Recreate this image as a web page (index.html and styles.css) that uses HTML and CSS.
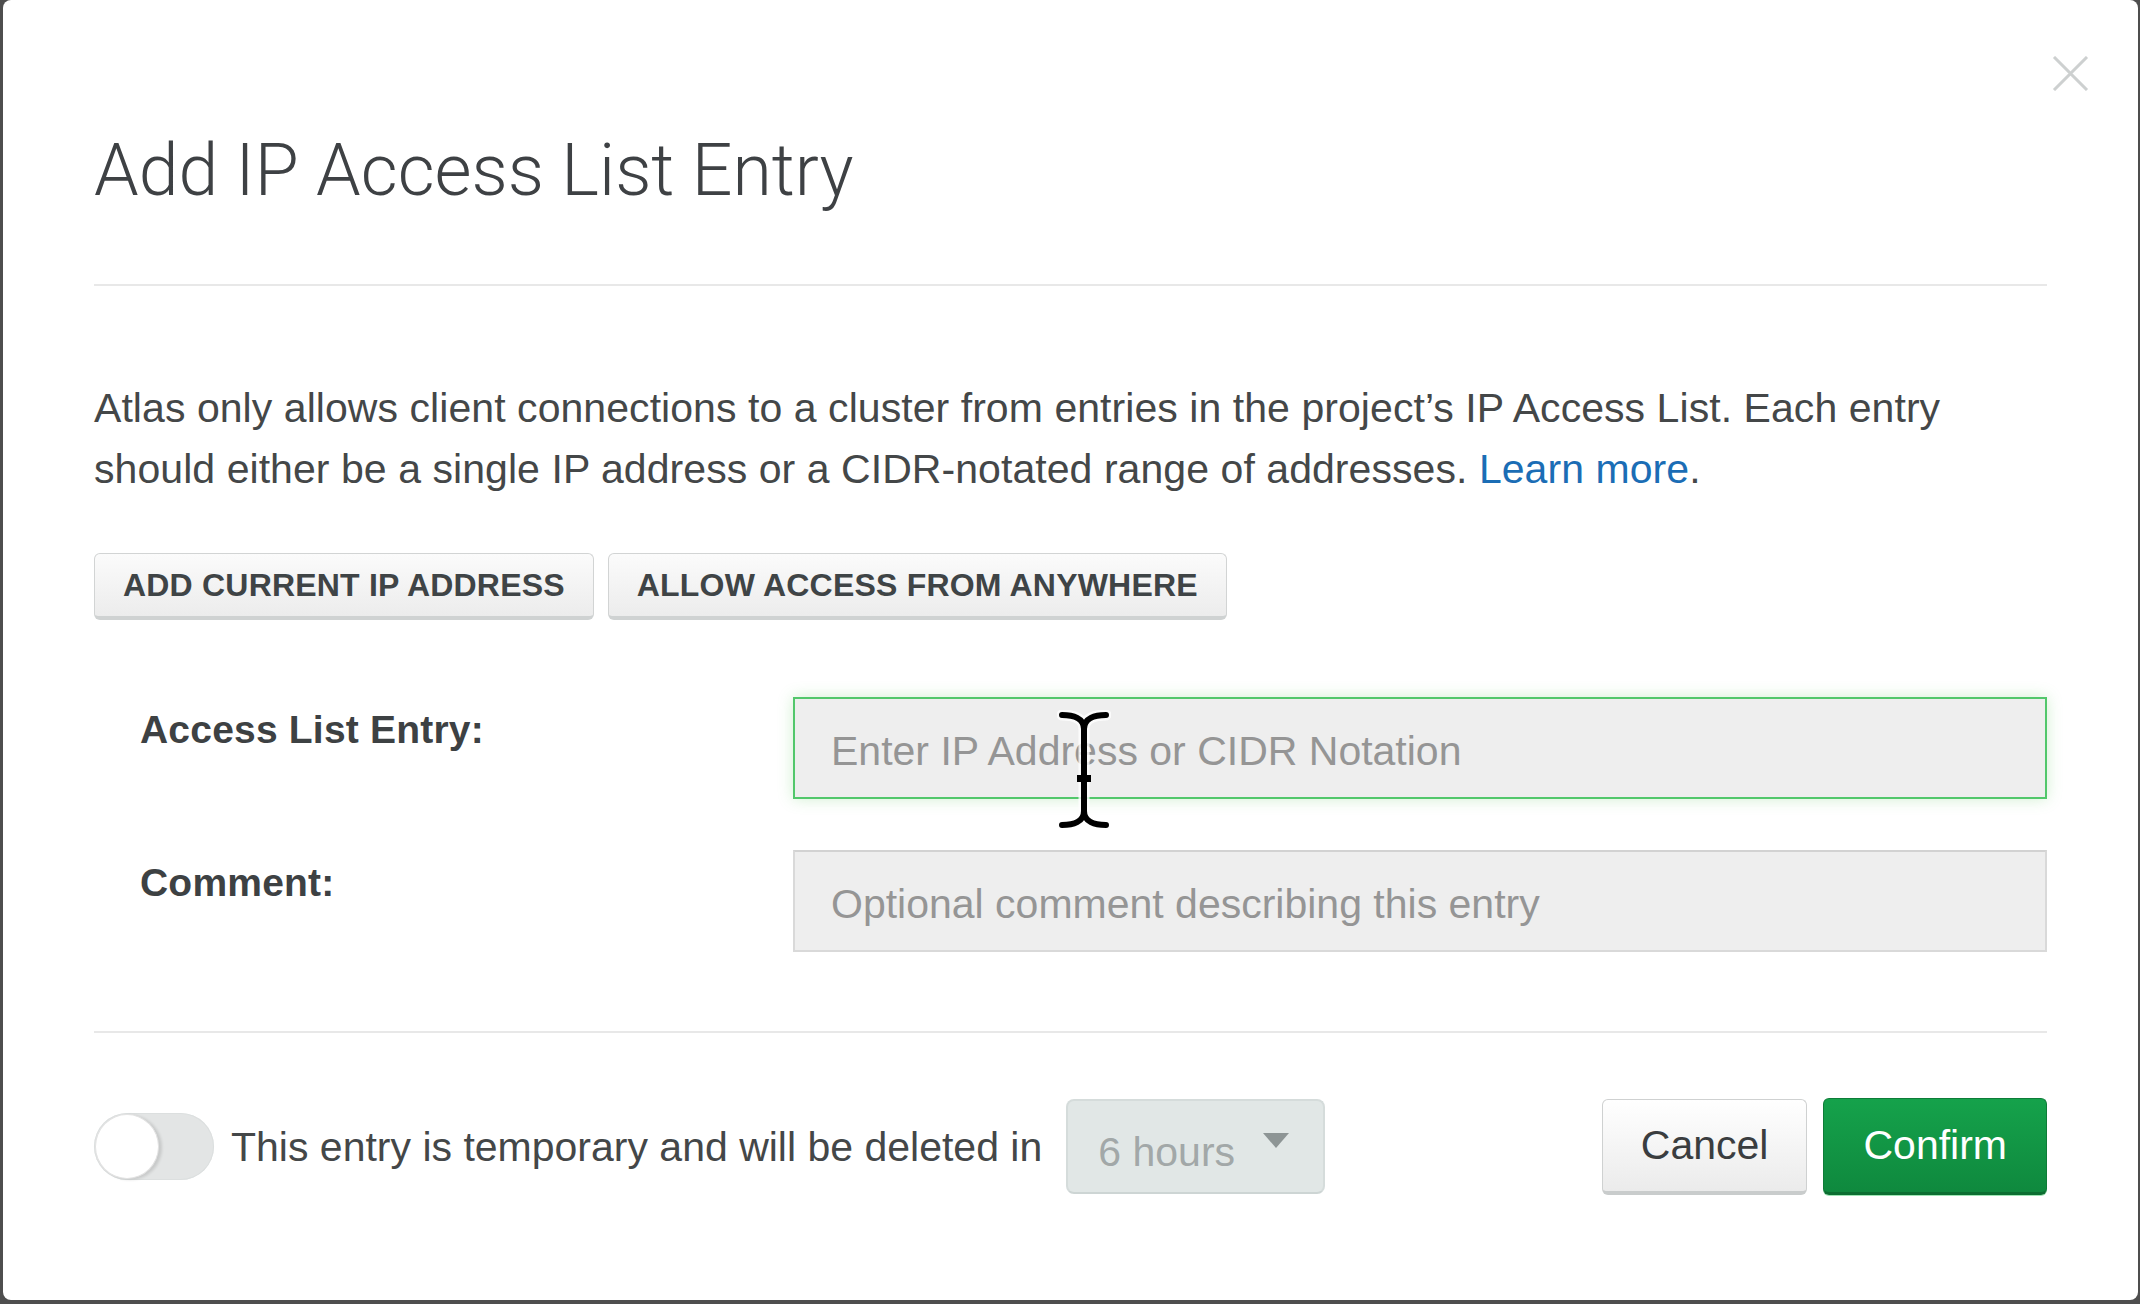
FILE: index.html
```html
<!DOCTYPE html>
<html lang="en">
<head>
<meta charset="utf-8">
<title>Add IP Access List Entry</title>
<link rel="stylesheet" href="styles.css">
</head>
<body>
<div class="backdrop">
  <div class="modal">
    <button class="close" aria-label="Close">
      <svg viewBox="0 0 37 35" width="37" height="35"><path d="M2 1 L35 34 M35 1 L2 34" fill="none" stroke="#cdd0d0" stroke-width="3"/></svg>
    </button>
    <header class="modal-header">
      <h1 class="title">Add IP Access List Entry</h1>
    </header>
    <div class="modal-body">
      <p class="intro">Atlas only allows client connections to a cluster from entries in the project’s IP Access List. Each entry should either be a single IP address or a CIDR-notated range of addresses. <a class="link" href="#">Learn more</a>.</p>
      <div class="quick-actions">
        <button class="btn-upper">ADD CURRENT IP ADDRESS</button>
        <button class="btn-upper">ALLOW ACCESS FROM ANYWHERE</button>
      </div>
      <div class="form-grid">
        <label class="form-label">Access List Entry:</label>
        <input class="text-input is-focused" type="text" placeholder="Enter IP Address or CIDR Notation">
        <label class="form-label">Comment:</label>
        <input class="text-input" type="text" placeholder="Optional comment describing this entry">
      </div>
    </div>
    <footer class="modal-footer">
      <div class="footer-left">
        <span class="toggle"><span class="knob"></span></span>
        <span class="temp-text">This entry is temporary and will be deleted in</span>
        <div class="select"><span class="select-value">6 hours</span><span class="caret"></span></div>
      </div>
      <div class="footer-right">
        <button class="btn btn-default">Cancel</button>
        <button class="btn btn-primary">Confirm</button>
      </div>
    </footer>
    <svg class="cursor" viewBox="0 0 54 120" width="54" height="120">
      <g fill="none" stroke="#fff" stroke-width="11" stroke-linecap="round" opacity="0.8">
        <path d="M5 5 C16 5 27 8 27 19 C27 8 38 5 49 5"/>
        <path d="M27 19 V101"/>
        <path d="M5 115 C16 115 27 112 27 101 C27 112 38 115 49 115"/>
      </g>
      <g fill="none" stroke="#000" stroke-width="6" stroke-linecap="round">
        <path d="M5 5 C16 5 27 8 27 19 C27 8 38 5 49 5"/>
        <path d="M27 19 V101"/>
        <path d="M5 115 C16 115 27 112 27 101 C27 112 38 115 49 115"/>
      </g>
      <rect x="20" y="65" width="14" height="7" fill="#000"/>
    </svg>
  </div>
</div>
</body>
</html>
```

FILE: styles.css
```css
* { box-sizing: border-box; }
html, body { margin: 0; padding: 0; }
body {
  background: #4e4e4e;
  font-family: "Liberation Sans", Arial, sans-serif;
  color: #444748;
}
.backdrop {
  height: 1304px;
  padding: 0 2px 4px 3px;
}
.modal {
  position: relative;
  height: 1300px;
  background: #fff;
  border-radius: 8px;
  padding: 0 91px;
}
.close {
  position: absolute;
  left: 2049px;
  top: 56px;
  width: 37px;
  height: 35px;
  padding: 0;
  border: 0;
  background: transparent;
}
.close svg { display: block; }
.modal-header {
  padding-top: 136px;
  padding-bottom: 78px;
  border-bottom: 2px solid #e8e8e8;
}
.title {
  margin: 0;
  font-family: Roboto, "Liberation Sans", sans-serif;
  font-weight: 300;
  font-size: 71.5px;
  line-height: 70px;
  color: #3e4144;
}
.modal-body {
  padding-bottom: 79px;
  border-bottom: 2px solid #e8e8e8;
}
.intro {
  margin: 92px 0 0;
  font-size: 41px;
  line-height: 61px;
  letter-spacing: 0.06px;
  color: #444748;
}
.link {
  color: #1b6db5;
  text-decoration: none;
}
.quick-actions {
  display: flex;
  gap: 14px;
  margin-top: 53px;
}
.btn-upper {
  height: 67px;
  padding: 0 28px;
  font-family: "Liberation Sans", Arial, sans-serif;
  font-weight: 700;
  font-size: 32px;
  letter-spacing: 0.2px;
  color: #3f4446;
  background: linear-gradient(#fbfbfb, #ececec);
  border: 1px solid #d2d4d4;
  border-bottom: 4px solid #cfd2d2;
  border-radius: 6px;
}
.form-grid {
  display: grid;
  grid-template-columns: 699px 1fr;
  row-gap: 51px;
  margin-top: 77px;
}
.form-label {
  padding-left: 46px;
  padding-top: 9px;
  font-weight: 700;
  font-size: 39px;
  line-height: 47px;
  letter-spacing: 0.2px;
  color: #3d4143;
}
.text-input {
  display: block;
  width: 100%;
  height: 102px;
  margin: 0;
  padding: 6px 36px 0;
  font-family: "Liberation Sans", Arial, sans-serif;
  font-size: 41px;
  color: #444;
  background: #eeeeee;
  border: 2px solid #d9d9d9;
  border-top-color: #d2d2d2;
  border-radius: 0;
  outline: none;
}
.text-input::placeholder { color: #959595; opacity: 1; }
.text-input.is-focused {
  border-color: #52c76b;
  box-shadow: 0 0 14px rgba(90, 200, 90, 0.28);
}
.modal-footer {
  display: flex;
  align-items: center;
  justify-content: space-between;
  padding-top: 65px;
}
.footer-left {
  display: flex;
  align-items: center;
}
.toggle {
  position: relative;
  display: block;
  flex-shrink: 0;
  width: 120px;
  height: 67px;
  border-radius: 34px;
  background: #e3e5e5;
  box-shadow: inset 0 0 0 1px #dcdfdf;
}
.knob {
  position: absolute;
  left: 1px;
  top: 1px;
  width: 64px;
  height: 65px;
  border-radius: 50%;
  background: #fff;
  border: 1px solid #e2e2e2;
  box-shadow: 3px 1px 3px rgba(0, 0, 0, 0.12);
}
.temp-text {
  margin-left: 17px;
  font-size: 41px;
  line-height: 50px;
  white-space: nowrap;
  color: #444748;
}
.select {
  display: flex;
  align-items: center;
  flex-shrink: 0;
  width: 259px;
  height: 95px;
  margin-left: 24px;
  padding: 0 0 0 30px;
  background: #e1e7e6;
  border: 2px solid #d5dcdb;
  border-bottom-color: #cdd5d4;
  border-radius: 8px;
}
.select-value {
  margin-top: 10px;
  font-size: 41px;
  line-height: 50px;
  white-space: nowrap;
  color: #a2a8a8;
}
.caret {
  flex-shrink: 0;
  width: 0;
  height: 0;
  margin-left: 28px;
  margin-bottom: 12px;
  border-left: 13px solid transparent;
  border-right: 13px solid transparent;
  border-top: 15px solid #8d9595;
}
.footer-right {
  display: flex;
  align-items: center;
  gap: 16px;
}
.btn {
  height: 96px;
  padding: 0 38px;
  font-family: "Liberation Sans", Arial, sans-serif;
  font-size: 41px;
  border-radius: 6px;
}
.btn-default {
  color: #3a3d3f;
  background: linear-gradient(#ffffff, #ebebeb);
  border: 1px solid #cfd1d1;
  border-bottom: 4px solid #c9cccc;
}
.btn-primary {
  height: 97px;
  padding: 0 39px;
  color: #fff;
  background: linear-gradient(#15a24b, #0f893e);
  border: 1px solid #0e7c38;
  border-bottom: 3px solid #0c6e31;
  box-shadow: 0 1px 0 #9ee6b4;
}
.cursor {
  position: absolute;
  left: 1054px;
  top: 710px;
}
```
